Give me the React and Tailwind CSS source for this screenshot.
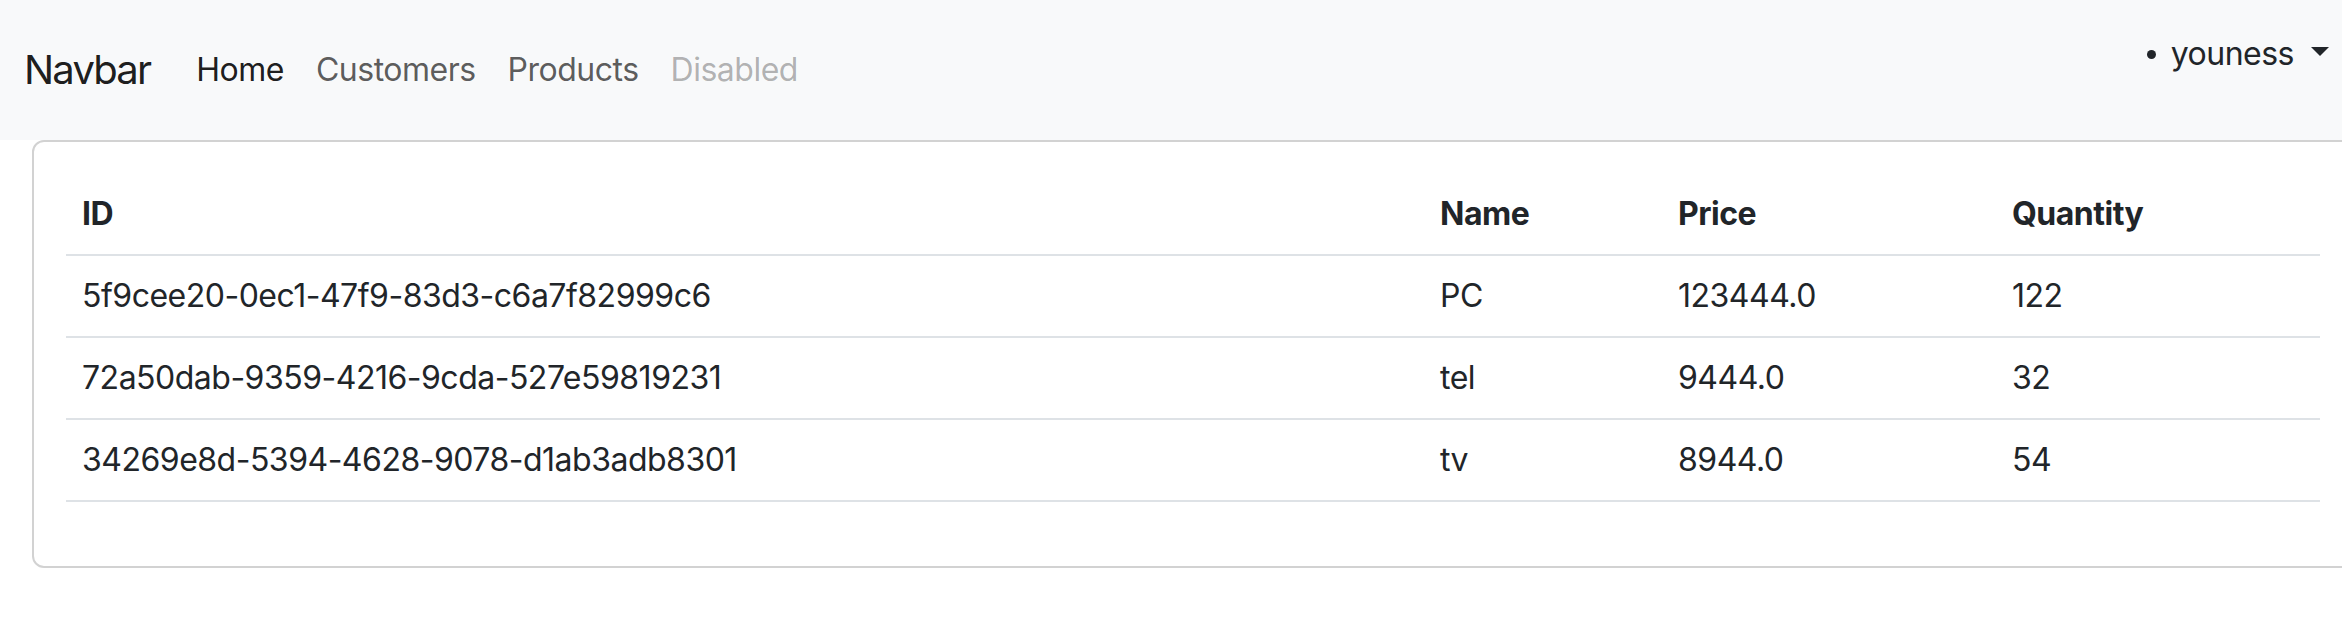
import React from 'react';

const products = [
  { id: '5f9cee20-0ec1-47f9-83d3-c6a7f82999c6', name: 'PC', price: '123444.0', quantity: 122 },
  { id: '72a50dab-9359-4216-9cda-527e59819231', name: 'tel', price: '9444.0', quantity: 32 },
  { id: '34269e8d-5394-4628-9078-d1ab3adb8301', name: 'tv', price: '8944.0', quantity: 54 },
];

const links = [
  { label: 'Home', cls: 'text-black/90' },
  { label: 'Customers', cls: 'text-black/65' },
  { label: 'Products', cls: 'text-black/65' },
  { label: 'Disabled', cls: 'text-black/30' },
];

const App = () => {
  return (
    <div
      className="w-[2342px] min-h-[628px] overflow-hidden bg-white text-[#212529] tracking-[-0.5px]"
      style={{ fontFamily: 'Inter, "Noto Sans", sans-serif' }}
    >
      <nav className="h-[140px] bg-[#f8f9fa] flex items-center justify-between pl-[24px] pr-[13px]">
        <div className="flex items-center">
          <a className="text-[40px] leading-[60px] tracking-[-1.8px] text-black/90 mr-[30px]">Navbar</a>
          <ul className="flex items-center">
            {links.map((l) => (
              <li key={l.label}>
                <a className={`block px-[16px] text-[32px] leading-[48px] ${l.cls}`}>{l.label}</a>
              </li>
            ))}
          </ul>
        </div>

        <ul className="mb-[32px] flex items-center">
          <li className="flex items-center">
            <span className="w-[9px] h-[9px] rounded-full bg-[#212529] mr-[15px]"></span>
            <a className="text-[32px] leading-[48px] text-[#212529]">youness</a>
            <span className="ml-[17px] mb-[6px] w-0 h-0 border-l-[9px] border-r-[9px] border-t-[9px] border-l-transparent border-r-transparent border-t-[#212529]"></span>
          </li>
        </ul>
      </nav>

      <div className="pl-[32px]">
        <div className="w-[2322px] border-2 border-[#d2d2d2] rounded-[12px] bg-white">
          <div className="p-[32px]">
            <table className="w-[2254px] table-fixed border-collapse mb-[32px] text-[32px] leading-[48px]">
              <colgroup>
                <col className="w-[1358px]" />
                <col className="w-[238px]" />
                <col className="w-[334px]" />
                <col className="w-[324px]" />
              </colgroup>
              <thead>
                <tr className="border-b-2 border-[#dee2e6]">
                  <th className="text-left font-bold px-[16px] py-[16px]">ID</th>
                  <th className="text-left font-bold px-[16px] py-[16px]">Name</th>
                  <th className="text-left font-bold px-[16px] py-[16px]">Price</th>
                  <th className="text-left font-bold px-[16px] py-[16px]">Quantity</th>
                </tr>
              </thead>
              <tbody>
                {products.map((p) => (
                  <tr key={p.id} className="border-b-2 border-[#dee2e6]">
                    <td className="px-[16px] py-[16px]">{p.id}</td>
                    <td className="px-[16px] py-[16px]">{p.name}</td>
                    <td className="px-[16px] py-[16px]">{p.price}</td>
                    <td className="px-[16px] py-[16px]">{p.quantity}</td>
                  </tr>
                ))}
              </tbody>
            </table>
          </div>
        </div>
      </div>
    </div>
  );
};

export default App;
